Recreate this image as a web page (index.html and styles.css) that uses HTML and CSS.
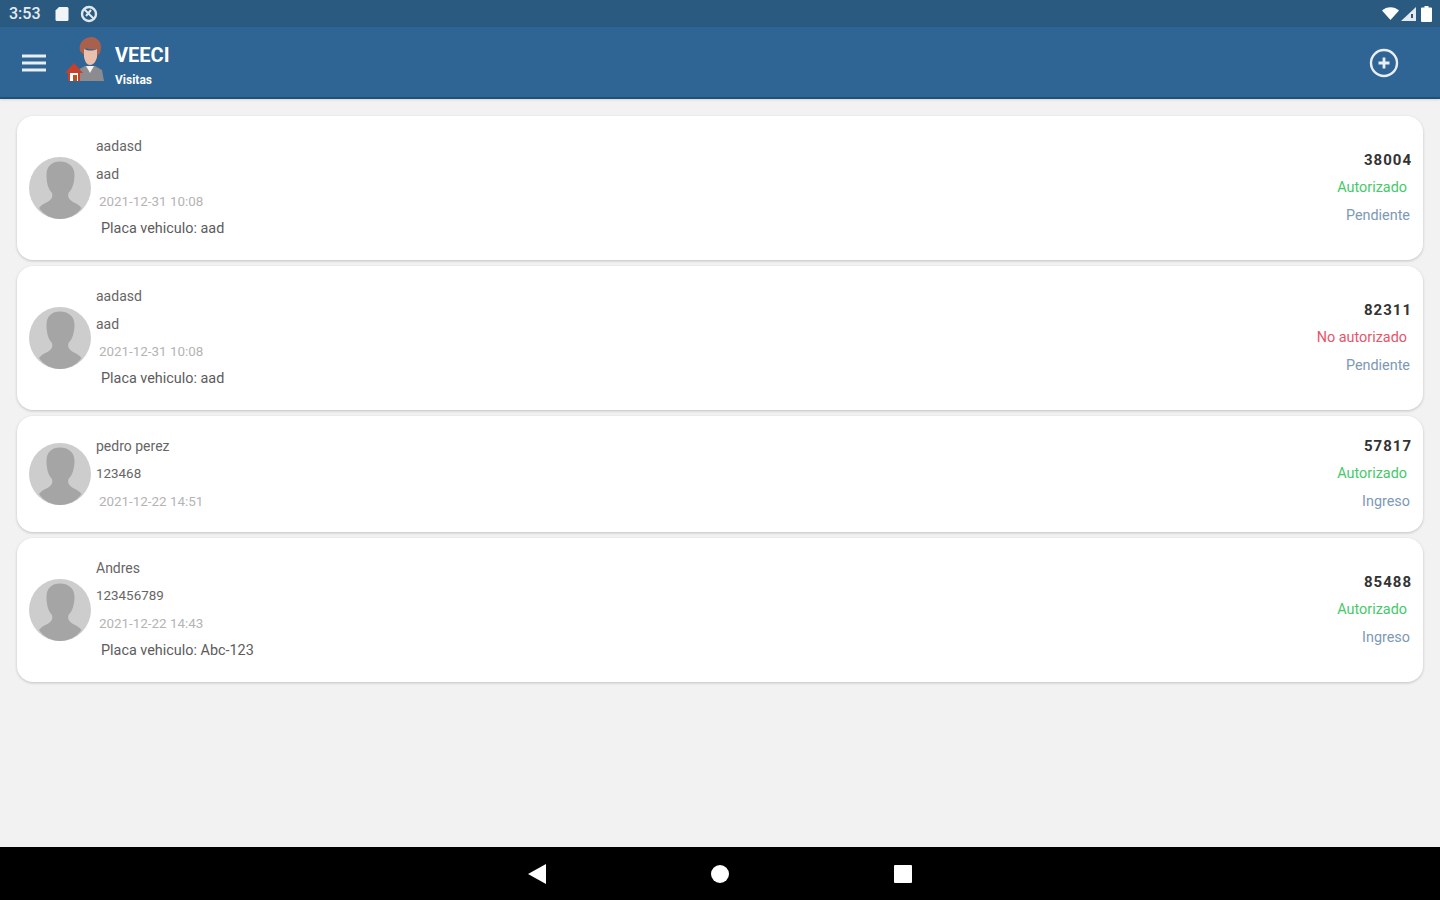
FILE: index.html
```html
<!DOCTYPE html>
<html lang="es">
<head>
    <meta charset="UTF-8">
    <title>VEECI Visitas</title>
    <link rel="stylesheet" href="styles.css">
</head>
<body>
<div class="statusbar">
    <div class="status-left">
        <span class="clock">3:53</span>
        <svg width="14" height="16" viewBox="0 0 14 16"><path d="M4 1h8a1.500 1.500 0 0 1 1.500 1.500v11a1.500 1.500 0 0 1-1.500 1.500H2a1.500 1.500 0 0 1-1.500-1.500V4.500z" fill="#f2f5f8"/></svg>
        <svg width="18" height="18" viewBox="0 0 18 18"><circle cx="9" cy="9" r="7" fill="none" stroke="#dfe7ee" stroke-width="2.400"/><path d="M4 4l10 10M6 11l5-6" stroke="#dfe7ee" stroke-width="2"/></svg>
    </div>
    <div class="status-right">
        <svg width="17" height="13" viewBox="0 0 17 13"><path d="M0 3.500C4.500-1 12.500-1 17 3.500L8.500 13z" fill="#fff"/></svg>
        <svg width="15" height="14" viewBox="0 0 15 14"><path d="M15 0v14H0z" fill="#e4eaf0"/><path d="M10 7h2v4h-2z" fill="#2a5a7f"/></svg>
        <svg width="11" height="16" viewBox="0 0 11 16"><path d="M3.500 0h4v1.500h2.500a1 1 0 0 1 1 1V15a1 1 0 0 1-1 1H1a1 1 0 0 1-1-1V2.500a1 1 0 0 1 1-1h2.500z" fill="#fff"/></svg>
    </div>
</div>

<header class="appbar">
    <svg class="menu" width="24" height="18" viewBox="0 0 24 18"><path d="M0 2h24M0 9h24M0 16h24" stroke="#e8eef4" stroke-width="2.800"/></svg>
    <svg class="logo" width="40" height="44" viewBox="0 0 40 44">
        <path d="M13 44V33l7-4h10l7 4 2 11z" fill="#8b8b90"/>
        <path d="M21 29h8l-4 7z" fill="#f4f4f4"/>
        <path d="M15 14C13 5 20 0 27 0c7 1 11 7 8 16l-3 3V12c-5 1-9 0-11-1l-1 8z" fill="#a9604d"/>
        <path d="M19 12c4 2 9 2 13 0v8c-1 5-4 8-7 8s-5-3-6-8z" fill="#eac0ad"/>
        <path d="M0 36l9-10 9 10h-3v8H3v-8z" fill="#c8402a"/>
        <path d="M5 36h8v8H5z" fill="#fff"/>
        <path d="M8 38h4v6H8z" fill="#b5561e"/>
    </svg>
    <div class="brand">
        <div class="brand-name">VEECI</div>
        <div class="brand-sub">Visitas</div>
    </div>
    <svg class="add" width="30" height="30" viewBox="0 0 30 30"><circle cx="15" cy="15" r="13" fill="none" stroke="#e8eef4" stroke-width="2.400"/><path d="M15 9.500v11M9.500 15h11" stroke="#e8eef4" stroke-width="2.800"/></svg>
</header>

<main class="list">
    <div class="card">
        <svg class="avatar" viewBox="0 0 62 62"><use href="#person"/></svg>
        <div class="info">
            <p class="line">aadasd</p>
            <p class="line">aad</p>
            <p class="line date">2021-12-31 10:08</p>
            <p class="line plate">Placa vehiculo: aad</p>
        </div>
        <div class="side">
            <p class="code">38004</p>
            <p class="auth ok">Autorizado</p>
            <p class="state">Pendiente</p>
        </div>
    </div>
    <div class="card">
        <svg class="avatar" viewBox="0 0 62 62"><use href="#person"/></svg>
        <div class="info">
            <p class="line">aadasd</p>
            <p class="line">aad</p>
            <p class="line date">2021-12-31 10:08</p>
            <p class="line plate">Placa vehiculo: aad</p>
        </div>
        <div class="side">
            <p class="code">82311</p>
            <p class="auth no">No autorizado</p>
            <p class="state">Pendiente</p>
        </div>
    </div>
    <div class="card">
        <svg class="avatar" viewBox="0 0 62 62"><use href="#person"/></svg>
        <div class="info">
            <p class="line">pedro perez</p>
            <p class="line doc">123468</p>
            <p class="line date">2021-12-22 14:51</p>
        </div>
        <div class="side">
            <p class="code">57817</p>
            <p class="auth ok">Autorizado</p>
            <p class="state in">Ingreso</p>
        </div>
    </div>
    <div class="card">
        <svg class="avatar" viewBox="0 0 62 62"><use href="#person"/></svg>
        <div class="info">
            <p class="line">Andres</p>
            <p class="line doc">123456789</p>
            <p class="line date">2021-12-22 14:43</p>
            <p class="line plate">Placa vehiculo: Abc-123</p>
        </div>
        <div class="side">
            <p class="code">85488</p>
            <p class="auth ok">Autorizado</p>
            <p class="state in">Ingreso</p>
        </div>
    </div>
</main>

<footer class="navbar">
    <svg width="18" height="20" viewBox="0 0 18 20"><path d="M18 0v20L0 10z" fill="#fff"/></svg>
    <svg width="18" height="18" viewBox="0 0 18 18"><circle cx="9" cy="9" r="9" fill="#fff"/></svg>
    <svg width="18" height="18" viewBox="0 0 18 18"><rect width="18" height="18" rx="1" fill="#fff"/></svg>
</footer>

<svg class="defs" width="0" height="0">
    <symbol id="person" viewBox="0 0 62 62">
        <circle cx="31" cy="31" r="31" fill="#cdcdcd"/>
        <path d="M17.500 18C17.500 9 23 4.500 31 4.500S45.500 9 45.500 18c0 7-2 14-6 18-1 3 0 6 3 8 3 2 7 3 10 7-5 7-13 11-21.500 11S15 58 10 51c3-4 7-5 10-7 3-2 4-5 3-8-4-4-5.500-11-5.500-18z" fill="#a5a5a5"/>
    </symbol>
</svg>
</body>
</html>
```

FILE: styles.css
```css
html,body{margin: 0;padding: 0;}
p{margin: 0;}
body{width: 1440px;height: 900px;display: flex;flex-direction: column;overflow: hidden;background: #f2f2f2;font-family: Roboto, "Liberation Sans", sans-serif;}
.defs{position: absolute;}

.statusbar{height: 27px;flex: none;display: flex;justify-content: space-between;align-items: center;padding: 0 8px 0 9px;background: #2a5a7f;}
.status-left{display: flex;align-items: center;gap: 14px;}
.clock{font-size: 16px;color: #e6ecf1;font-weight: 500;}
.status-left svg:last-child{margin-left: -3px;}
.status-right{display: flex;align-items: center;gap: 2px;}
.status-right svg:last-child{margin-left: 3px;}

.appbar{height: 68px;flex: none;display: flex;align-items: center;padding: 2px 41px 0 22px;background: #2f6594;border-bottom: 2px solid #1d5176;box-shadow: 0 1px 2px rgba(0,0,0,.12);}
.logo{margin: -8px 0 0 19px;}
.brand{margin: 7px 0 0 10px;color: #fff;font-weight: 700;}
.brand-name{font-size: 20px;line-height: 26px;}
.brand-sub{font-size: 12px;line-height: 24px;}
.add{margin-left: auto;}

.list{flex: 1;display: flex;flex-direction: column;gap: 6px;padding: 17px 17px 0;}
.card{display: flex;align-items: center;padding: 16px 11px 16px 12px;background: #fff;border-radius: 16px;box-shadow: 0 1px 3px rgba(0,0,0,.2);}
.avatar{width: 62px;height: 62px;flex: none;}
.info{margin-left: 5px;}
.line{font-size: 14px;line-height: 28px;color: #666;}
.doc{font-size: 13.400px;}
.date{font-size: 13.400px;color: #b4b4b4;padding-left: 3px;}
.plate{font-size: 14.400px;line-height: 26px;margin-bottom: 2px;padding-left: 5px;color: #5c5c5c;}

.side{margin-left: auto;text-align: right;}
.side p{line-height: 28px;font-size: 14.400px;}
.side .code{font-weight: 700;color: #333;font-size: 15px;letter-spacing: 1px;}
.auth{padding-right: 5px;}
.ok{color: #45c96a;}
.no{color: #e5566a;}
.state{color: #7d99b4;padding-right: 2px;}

.navbar{height: 53px;flex: none;display: flex;justify-content: center;align-items: center;gap: 165px;background: #000;}
```
